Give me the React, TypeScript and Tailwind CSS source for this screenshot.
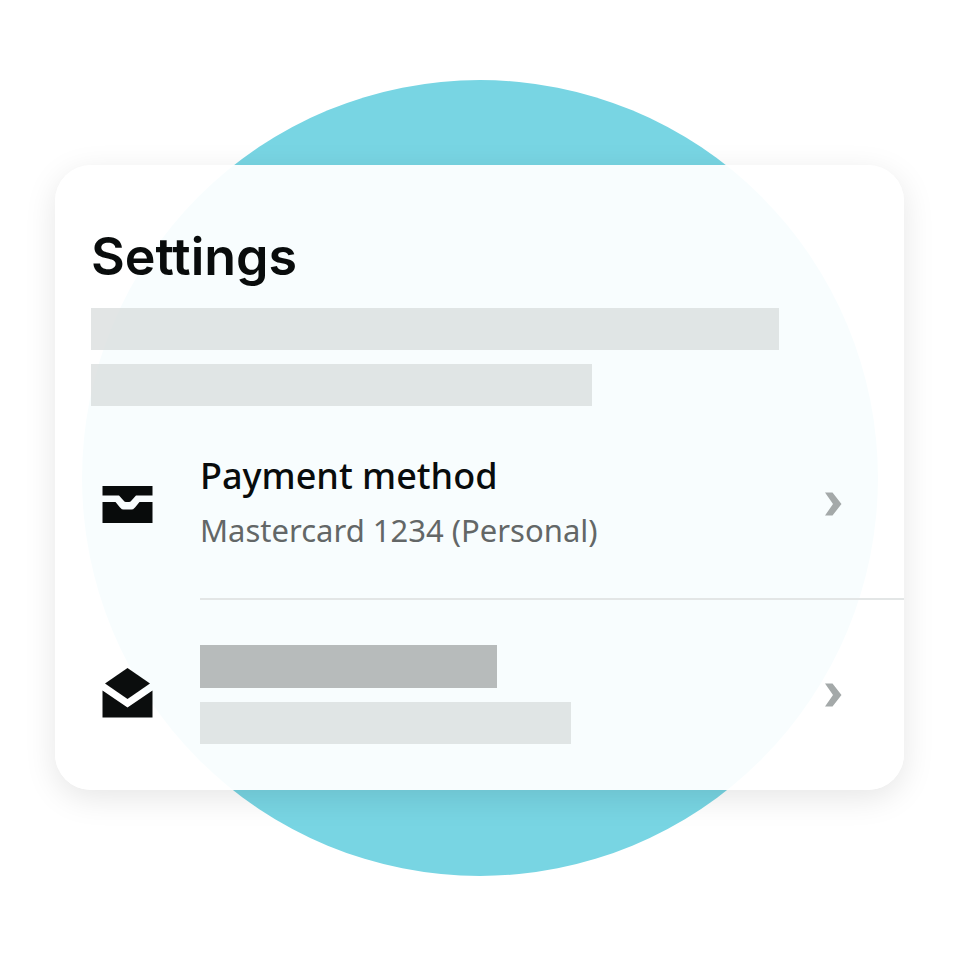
import type { ReactNode } from "react"

function WalletIcon() {
    return (
        <svg width="52" height="52" viewBox="0 0 52 52" fill="#080b0b" aria-hidden="true">
            <path d="M1.500 8h50v9.500H35l-4.500 5q-1.200 1.500-2.500 1.500h-3q-1.300 0-2.500-1.500l-4.500-5H1.500z" />
            <path d="M1.500 24h13l4.500 5.500q1.500 2 3.500 2h8q2 0 3.500-2l4.500-5.500h13v21h-50z" />
        </svg>
    )
}

function EnvelopeIcon() {
    return (
        <svg width="52" height="54" viewBox="0 0 52 54" fill="#0b0d0d" aria-hidden="true">
            <path d="M26.500 0L49 15.500l-22.500 15.500L4 15.500z" />
            <path d="M1.500 22.500l25 17 25-17v27h-50z" />
        </svg>
    )
}

function Chevron() {
    return (
        <svg width="18" height="24" viewBox="0 0 18 24" fill="#a4a9a9" aria-hidden="true">
            <path d="M1 .5h7.500l9 11.500-9 11.500H1L9 12z" />
        </svg>
    )
}

function SettingsRow({ icon, label, children }: { icon: ReactNode; label?: string; children: ReactNode }) {
    return (
        <button type="button" aria-label={label} className="flex w-full items-center pl-[46px] text-left">
            <span className="mr-[47px] shrink-0">{icon}</span>
            <span className="flex grow flex-col">{children}</span>
            <span className="mr-[62px] shrink-0">
                <Chevron />
            </span>
        </button>
    )
}

function App() {
    return (
        <main className="min-h-screen overflow-hidden bg-white pt-[165px] pr-[52px] pb-[166px] pl-[55px]">
            <div className="relative">
                {/* Backdrop */}
                <div className="absolute top-1/2 left-1/2 size-[796px] -translate-x-1/2 -translate-y-1/2 rounded-full bg-[#78d5e3]" />

                {/* Card */}
                <section className="relative overflow-hidden rounded-[36px] bg-white/95 pt-[60px] pb-[46px] shadow-[0_8px_32px_rgba(0,0,0,0.10)]">
                    <div className="px-9">
                        <h1 className="font-['Inter',sans-serif] text-[52px] leading-[64px] font-semibold text-[#090c0c]">
                            Settings
                        </h1>
                        <div className="mt-[19px] h-[42px] w-[688px] max-w-full bg-[#d8dcdc]/75" />
                        <div className="mt-[14px] h-[42px] w-[501px] max-w-full bg-[#d8dcdc]/75" />
                    </div>

                    <div className="mt-[48px]">
                        <SettingsRow icon={<WalletIcon />}>
                            <span className="font-['Noto_Sans',sans-serif] text-[36px] leading-[44px] font-medium text-[#090c0c]">
                                Payment method
                            </span>
                            <span className="mt-[10px] mb-[2px] font-['Noto_Sans',sans-serif] text-[31px] leading-[44px] text-[#636767]">
                                Mastercard 1234 (Personal)
                            </span>
                        </SettingsRow>
                        <hr className="mt-[44px] mb-[45px] ml-[145px] border-t-2 border-[#e3e6e6]" />
                        <SettingsRow icon={<EnvelopeIcon />} label="Messages">
                            <span className="h-[43px] w-[297px] bg-[#b7bbbb]" />
                            <span className="mt-[14px] h-[42px] w-[371px] bg-[#d8dcdc]/75" />
                        </SettingsRow>
                    </div>
                </section>
            </div>
        </main>
    )
}

export default App;
